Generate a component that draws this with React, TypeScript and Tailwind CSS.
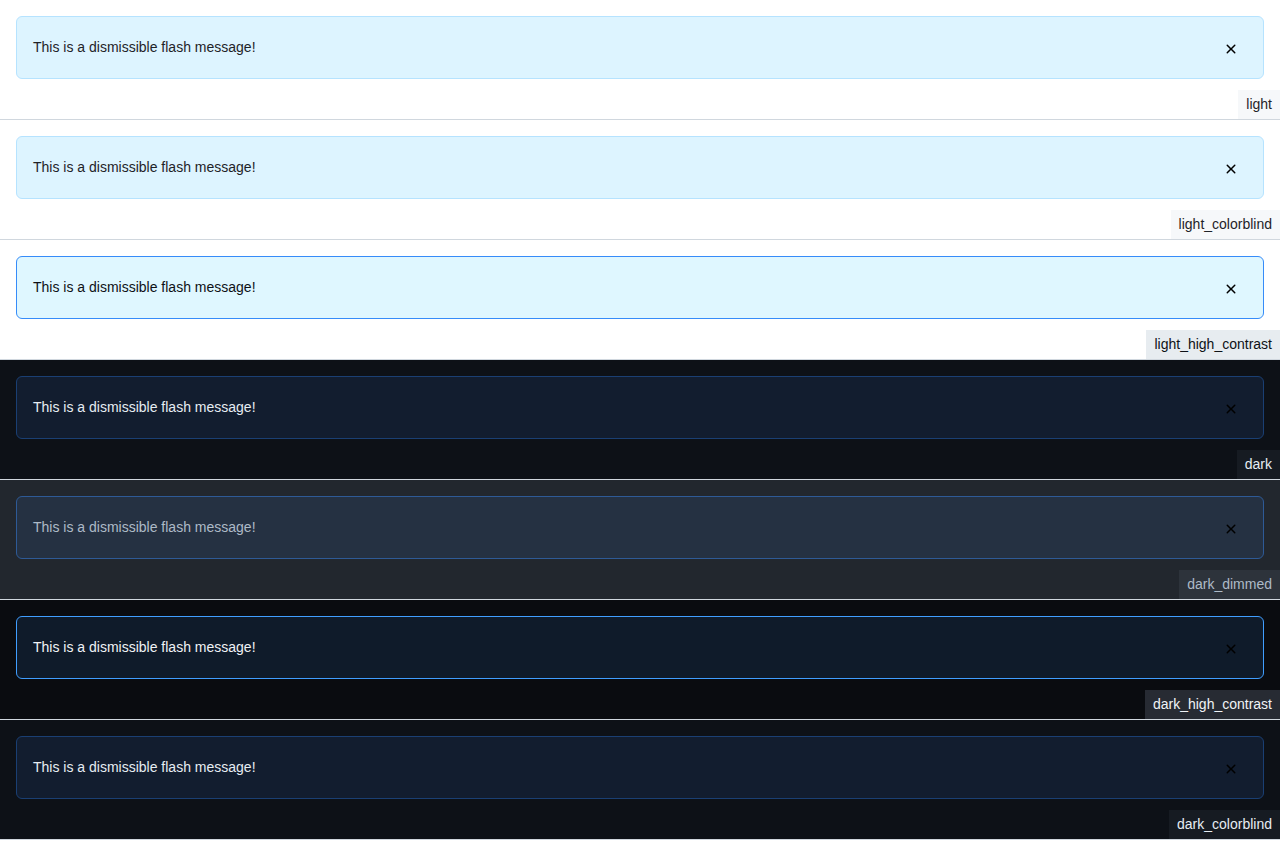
const themes = [
  {
    name: "light",
    section: "bg-white",
    flash: "bg-[#ddf4ff] border-[#b6e3ff] text-[#1f2328]",
    label: "bg-[#f6f8fa] text-[#1f2328]",
  },
  {
    name: "light_colorblind",
    section: "bg-white",
    flash: "bg-[#ddf4ff] border-[#b6e3ff] text-[#1f2328]",
    label: "bg-[#f6f8fa] text-[#1f2328]",
  },
  {
    name: "light_high_contrast",
    section: "bg-white",
    flash: "bg-[#dff7ff] border-[#368cf9] text-[#0e1116]",
    label: "bg-[#e7ecf0] text-[#0e1116]",
  },
  {
    name: "dark",
    section: "bg-[#0d1117]",
    flash: "bg-[#121d2f] border-[#1a3f73] text-[#e6edf3]",
    label: "bg-[#161b22] text-[#e6edf3]",
  },
  {
    name: "dark_dimmed",
    section: "bg-[#22272e]",
    flash: "bg-[#253142] border-[#2e5a96] text-[#adbac7]",
    label: "bg-[#2d333b] text-[#adbac7]",
  },
  {
    name: "dark_high_contrast",
    section: "bg-[#0a0c10]",
    flash: "bg-[#0f1b2a] border-[#409eff] text-[#f0f3f6]",
    label: "bg-[#272b33] text-[#f0f3f6]",
  },
  {
    name: "dark_colorblind",
    section: "bg-[#0d1117]",
    flash: "bg-[#121d2f] border-[#1a3f73] text-[#e6edf3]",
    label: "bg-[#161b22] text-[#e6edf3]",
  },
];

function XIcon() {
  return (
    <svg width="16" height="16" viewBox="0 0 16 16" fill="#000">
      <path d="M3.72 3.72a.75.75 0 0 1 1.06 0L8 6.94l3.22-3.22a.749.749 0 0 1 1.275.326.749.749 0 0 1-.215.734L9.06 8l3.22 3.22a.749.749 0 0 1-.326 1.275.749.749 0 0 1-.734-.215L8 9.06l-3.22 3.22a.751.751 0 0 1-1.042-.018.751.751 0 0 1-.018-1.042L6.94 8 3.72 4.78a.75.75 0 0 1 0-1.06Z" />
    </svg>
  );
}

export default function App() {
  return (
    <div className="min-h-[860px] bg-white font-['Liberation_Sans',Arial,sans-serif] text-sm">
      {themes.map((t) => (
        <section
          key={t.name}
          className={`flex flex-col border-b border-[#d0d7de] pt-4 ${t.section}`}
        >
          <div className="px-4">
            <div
              className={`flex items-start justify-between rounded-md border py-5 pl-4 pr-6 ${t.flash}`}
            >
              <span className="leading-[21px]">This is a dismissible flash message!</span>
              <button className="flex h-[21px] w-4 items-center justify-center pt-[3px]">
                <XIcon />
              </button>
            </div>
          </div>
          <div className="mt-[11px] flex justify-end">
            <span className={`px-2 py-1 leading-[21px] ${t.label}`}>{t.name}</span>
          </div>
        </section>
      ))}
    </div>
  );
}
